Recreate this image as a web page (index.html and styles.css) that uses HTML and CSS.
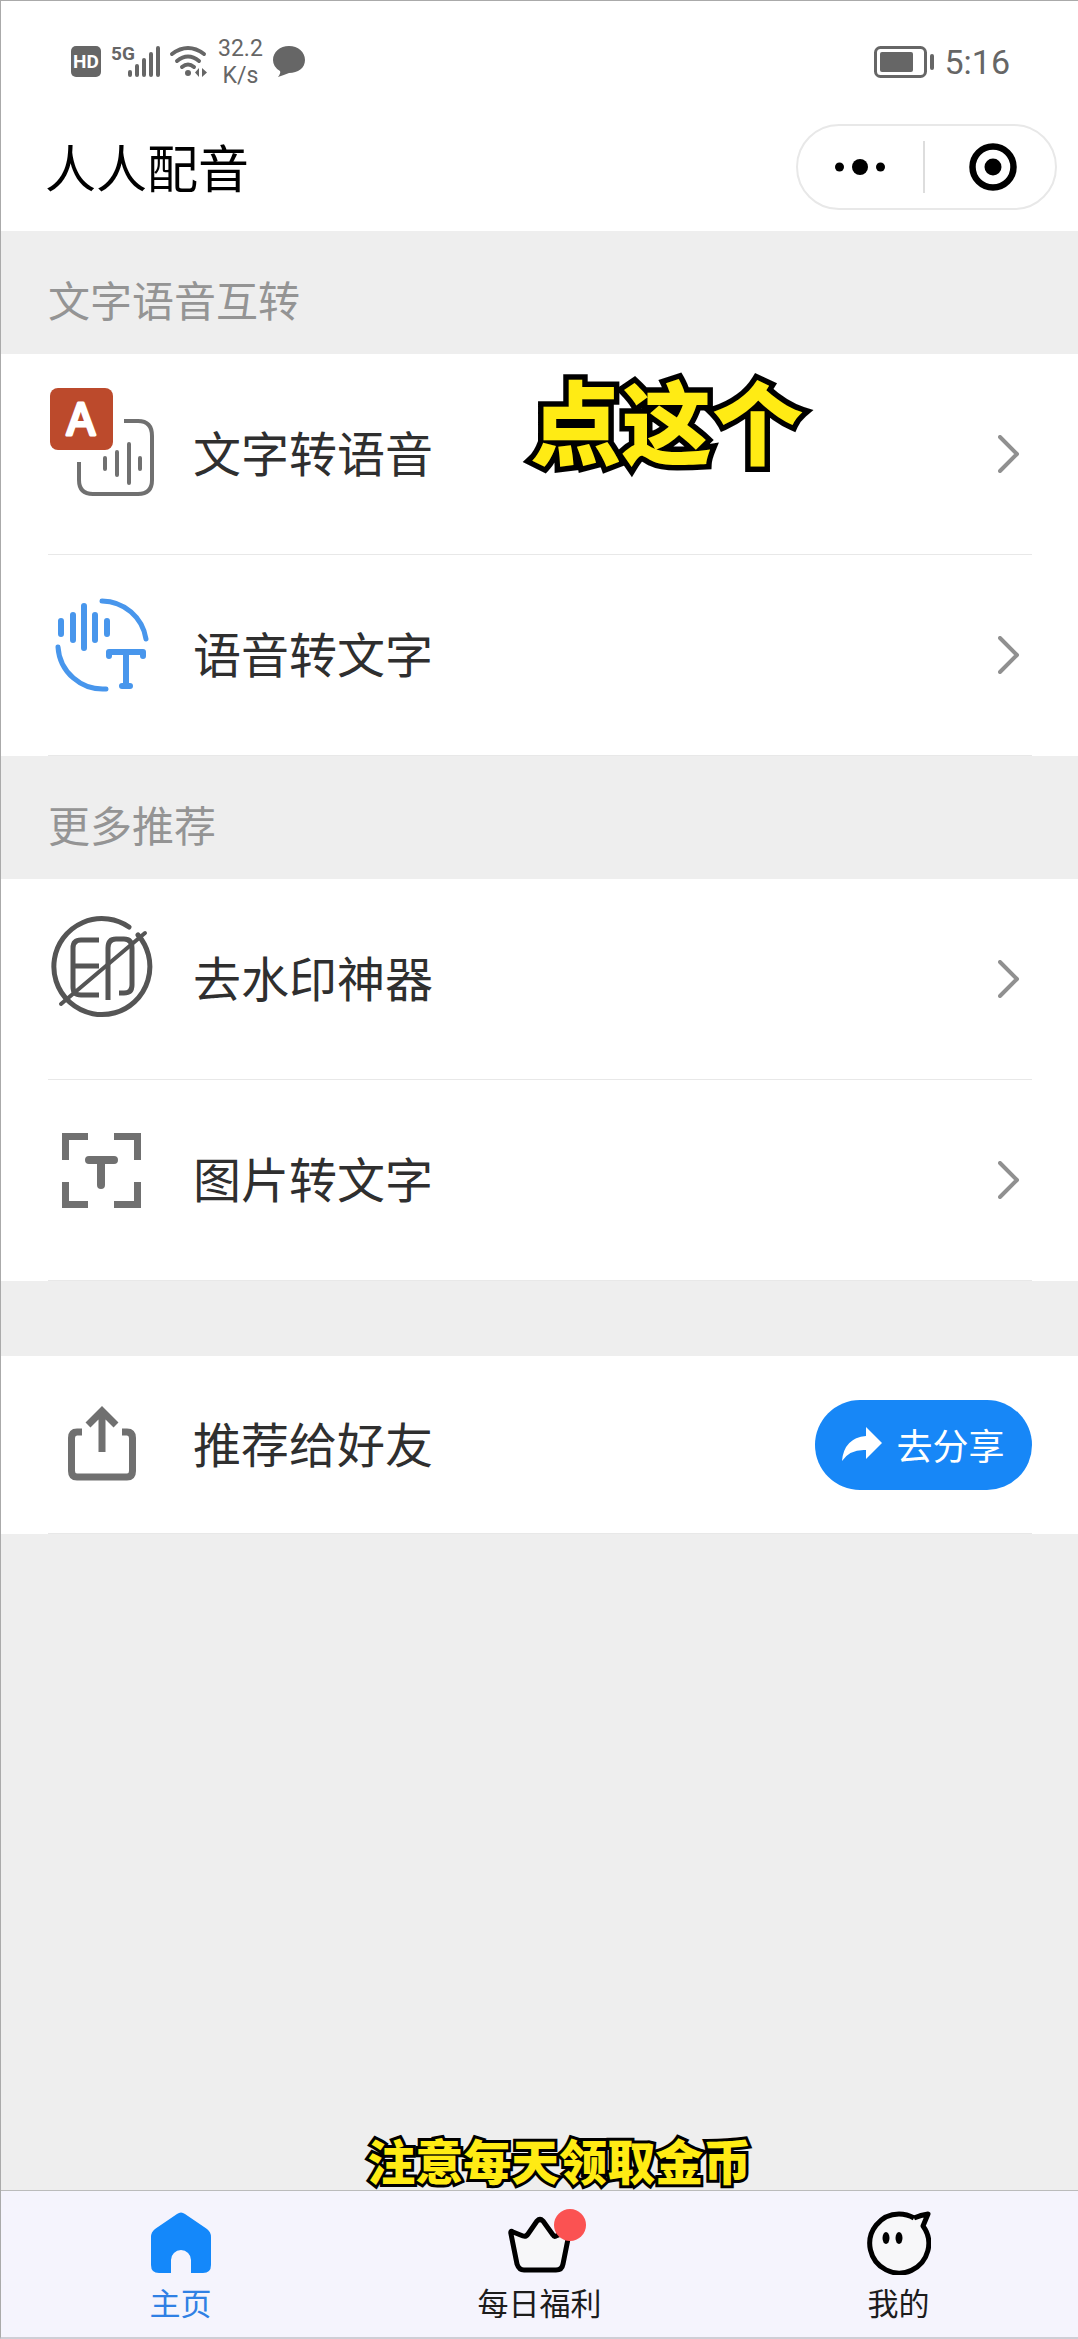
FILE: index.html
```html
<!DOCTYPE html>
<html lang="zh-CN">
<head>
<meta charset="utf-8">
<meta name="viewport" content="width=device-width, initial-scale=1">
<title>人人配音</title>
<link rel="stylesheet" href="styles.css">
</head>
<body>
<div class="app">
  <header class="header">
    <div class="status">
      <div class="status-group">
        <svg class="glyph" width="30" height="31" viewBox="0 0 30 31" aria-hidden="true">
          <rect width="30" height="31" rx="5"/>
          <text class="hd" x="15" y="22" text-anchor="middle">HD</text>
        </svg>
        <svg class="glyph" width="49" height="31" viewBox="0 0 49 31" aria-hidden="true">
          <text class="net" x="0" y="14">5G</text>
          <path class="signal" d="M19 26v3M26 20v9M33 14v15M40 8v21M47 2v27"/>
        </svg>
        <svg class="glyph" width="38" height="31" viewBox="0 0 38 31" aria-hidden="true">
          <path class="wave" d="M2 8Q18 -4 34 8M7 15Q18 6 29 15M12 21Q18 16 24 21"/>
          <circle cx="18" cy="27" r="3"/>
          <path d="M29 22v9l-4-4.500zM32 22v9l5-4.500z"/>
        </svg>
        <div class="speed"><span>32.2</span><span>K/s</span></div>
        <svg class="glyph" width="32" height="31" viewBox="0 0 32 31" aria-hidden="true">
          <path d="M16 0C25 0 32 6 32 14S25 27 16 27Q11 29 5 31Q8 27 7 25Q0 21 0 14C0 6 7 0 16 0z"/>
        </svg>
      </div>
      <div class="status-group">
        <svg class="glyph" width="60" height="32" viewBox="0 0 60 32" aria-hidden="true">
          <rect class="cell" x="1.500" y="1.500" width="50" height="29" rx="5"/>
          <rect x="6" y="6" width="33" height="20" rx="2"/>
          <rect x="56" y="8" width="4" height="16" rx="2"/>
        </svg>
        <time class="clock">5:16</time>
      </div>
    </div>
    <div class="navbar">
      <h1 class="title">人人配音</h1>
      <div class="capsule">
        <button class="capsule-button" type="button" aria-label="更多">
          <svg width="50" height="50" viewBox="0 0 50 50"><circle cx="4.500" cy="25" r="4.500"/><circle cx="25" cy="25" r="8"/><circle cx="45.500" cy="25" r="4.500"/></svg>
        </button>
        <span class="capsule-line"></span>
        <button class="capsule-button capsule-close" type="button" aria-label="关闭">
          <svg width="48" height="48" viewBox="0 0 48 48"><circle cx="24" cy="24" r="20.500" fill="none" stroke="#000" stroke-width="6.500"/><circle cx="24" cy="24" r="8.500"/></svg>
        </button>
      </div>
    </div>
  </header>

  <main class="content">
    <h2 class="group-title">文字语音互转</h2>
    <nav class="group">
      <a class="row" href="#tts">
        <svg class="row-icon" viewBox="0 0 108 108" aria-hidden="true">
          <rect x="2" y="0" width="63" height="62" rx="8" fill="#bc4a2c"/>
          <text class="badge-letter" x="33" y="47" text-anchor="middle">A</text>
          <path class="line dim" stroke-width="4" d="M76 33H90Q104 33 104 48V92Q104 106 90 106H45Q31 106 31 92V74"/>
          <path class="line dim round" stroke-width="4" d="M57 70V81M69 64V87M81 56V95M92 70V81"/>
        </svg>
        <span class="row-label">文字转语音</span>
        <strong class="caption caption-large">点这个</strong>
        <svg class="chevron" viewBox="0 0 22 38" aria-hidden="true"><path d="M2 2L19 19L2 36"/></svg>
      </a>
      <a class="row" href="#stt">
        <svg class="row-icon blue" viewBox="0 0 108 108" aria-hidden="true">
          <path class="line round" stroke-width="5" d="M54 12A45 45 0 0 1 98 50M10 58A45 45 0 0 0 58 100"/>
          <path class="line round" stroke-width="6" d="M13 32V45M25 26V51M36 17V59M47 26V51M59 32V45"/>
          <path class="line round" stroke-width="6" d="M61 67V63H95V67M78 63V97M74 97H82"/>
        </svg>
        <span class="row-label">语音转文字</span>
        <svg class="chevron" viewBox="0 0 22 38" aria-hidden="true"><path d="M2 2L19 19L2 36"/></svg>
      </a>
    </nav>

    <h2 class="group-title">更多推荐</h2>
    <nav class="group">
      <a class="row" href="#watermark">
        <svg class="row-icon dark" viewBox="0 0 108 108" aria-hidden="true">
          <path class="line round" stroke-width="5" d="M81 14A48 48 0 1 0 90 22"/>
          <path class="line round" stroke-width="4" d="M13 91L97 20"/>
          <path class="line" stroke-width="5" d="M51 27H33Q25 27 25 35V74Q25 82 33 82H51M25 53H51M60 87V35Q60 26 68 26H76Q84 26 84 35V72Q84 80 76 80H71"/>
        </svg>
        <span class="row-label">去水印神器</span>
        <svg class="chevron" viewBox="0 0 22 38" aria-hidden="true"><path d="M2 2L19 19L2 36"/></svg>
      </a>
      <a class="row" href="#ocr">
        <svg class="row-icon dim" viewBox="0 0 108 108" aria-hidden="true">
          <path class="line" stroke-width="7" d="M40 22.500H17.500V46M66 22.500H89.500V46M40 90.500H17.500V68M66 90.500H89.500V68"/>
          <path class="line round" stroke-width="8" d="M41 46H66M53 46V71"/>
        </svg>
        <span class="row-label">图片转文字</span>
        <svg class="chevron" viewBox="0 0 22 38" aria-hidden="true"><path d="M2 2L19 19L2 36"/></svg>
      </a>
    </nav>

    <section class="group group-share">
      <div class="row row-share">
        <svg class="row-icon dim" viewBox="0 0 108 108" aria-hidden="true">
          <path class="line" stroke-width="7" d="M34 41H29Q23.500 41 23.500 47V80Q23.500 86 29 86H79Q84.500 86 84.500 80V47Q84.500 41 79 41H74"/>
          <path class="line" stroke-width="7" d="M54 61V20M40 34L54 20L68 34"/>
        </svg>
        <span class="row-label">推荐给好友</span>
        <button class="share" type="button">
          <svg width="40" height="34" viewBox="0 0 40 34" aria-hidden="true"><path d="M24 0L40 16L24 32V23Q8 22 0 34Q2 11 24 9z" fill="#fff"/></svg>
          <span>去分享</span>
        </button>
      </div>
    </section>
  </main>

  <nav class="tabbar">
    <strong class="caption caption-small">注意每天领取金币</strong>
    <a class="tab tab-active" href="#home">
      <svg class="tab-icon" viewBox="0 0 64 64" aria-hidden="true"><path d="M28 3Q32 0 36 3L58 18Q62 21 62 26V54Q62 62 54 62H42V49A10 10 0 0 0 22 49V62H10Q2 62 2 54V26Q2 21 6 18z" fill="#1488fa"/></svg>
      <span>主页</span>
    </a>
    <a class="tab" href="#daily">
      <span class="tab-badge-box">
        <svg class="tab-icon" viewBox="0 0 64 64" aria-hidden="true"><path class="ink" d="M5 21Q2 19 3 23L9 53Q11 59 16 59H48Q54 59 55 53L61 23Q62 19 58 21L48 25Q46 26 45 24L35 10Q32 7 29 10L20 23Q18 26 15 25z"/></svg>
        <span class="dot"></span>
      </span>
      <span>每日福利</span>
    </a>
    <a class="tab" href="#me">
      <svg class="tab-icon" viewBox="0 0 64 64" aria-hidden="true"><path class="ink" d="M47 7Q40 3 32 3A29.500 29.500 0 1 0 56 15L61 3Q54 4 47 7"/><ellipse cx="19" cy="27" rx="3.500" ry="6"/><ellipse cx="32" cy="27" rx="3.500" ry="6"/></svg>
      <span>我的</span>
    </a>
  </nav>
</div>
</body>
</html>
```
FILE: styles.css
```css
* {
  box-sizing: border-box;
}

body {
  margin: 0;
  background: #eee;
  color: #2f2f2f;
  font-family: "Noto Sans CJK SC", sans-serif;
}

a {
  color: inherit;
  text-decoration: none;
}

button {
  border: 0;
  padding: 0;
  font: inherit;
  cursor: pointer;
}

h1, h2 {
  margin: 0;
  font-weight: 400;
}

svg {
  display: block;
  flex: none;
}

.app {
  display: flex;
  flex-direction: column;
  min-height: 100vh;
  border-top: 1px solid #aaa;
  border-left: 1px solid #aaa;
  border-bottom: 2px solid #cfced6;
}

/* Header */

.header {
  background: #fff;
  padding-bottom: 21px;
}

.status {
  display: flex;
  justify-content: space-between;
  align-items: center;
  height: 123px;
  padding: 0 68px 2px 70px;
  color: #666;
  font-family: Roboto, sans-serif;
}

.status-group {
  display: flex;
  align-items: center;
  gap: 10px;
}

.glyph {
  fill: #666;
  overflow: visible;
}

.hd {
  fill: #fff;
  font: 700 19px Roboto, sans-serif;
}

.net {
  font: 700 19px "Liberation Sans Narrow", Roboto, sans-serif;
}

.signal,
.wave,
.cell {
  fill: none;
  stroke: #666;
  stroke-width: 4;
  stroke-linecap: round;
}

.cell {
  stroke-width: 3;
}

.speed {
  display: flex;
  flex-direction: column;
  align-items: center;
  font-size: 23px;
  line-height: 27px;
}

.clock {
  font-size: 34px;
  line-height: 40px;
}

.navbar {
  display: flex;
  justify-content: space-between;
  align-items: center;
  padding: 0 21px 0 44px;
}

.title {
  padding-bottom: 2px;
  color: #000;
  font-size: 51px;
  line-height: 72px;
}

.capsule {
  display: flex;
  align-items: center;
  width: 261px;
  height: 86px;
  border: 2px solid #e8e8e8;
  border-radius: 43px;
}

.capsule-button {
  display: flex;
  flex: 1;
  justify-content: center;
  align-items: center;
  height: 100%;
  background: none;
}

.capsule-close {
  padding-left: 6px;
}

.capsule-line {
  width: 2px;
  height: 52px;
  background: #ddd;
}

/* Lists */

.content {
  flex: 1;
}

.group-title {
  padding: 36px 47px 24px;
  color: #949494;
  font-size: 42px;
  line-height: 63px;
}

.group {
  padding: 0 46px 0 47px;
  background: #fff;
}

.group-share {
  margin-top: 75px;
}

.row {
  position: relative;
  display: flex;
  align-items: center;
  height: 201px;
  border-bottom: 1px solid #e8e8e8;
}

.row-share {
  height: 178px;
}

.row-icon {
  width: 108px;
  height: 108px;
  margin-bottom: 24px;
}

.row-share .row-icon {
  margin-bottom: 0;
}

.row-label {
  flex: 1;
  padding: 0 0 6px 37px;
  font-size: 48px;
  line-height: 72px;
}

.line {
  fill: none;
  stroke: currentColor;
}

.round {
  stroke-linecap: round;
  stroke-linejoin: round;
}

.dim {
  color: #707070;
}

.dark {
  color: #555;
}

.blue {
  color: #4896ec;
}

.badge-letter {
  fill: #fff;
  stroke: #fff;
  stroke-width: 3;
  stroke-linejoin: round;
  font: 400 44px Inter, sans-serif;
}

.chevron {
  width: 22px;
  height: 38px;
  margin-right: 12px;
  fill: none;
  stroke: #909090;
  stroke-width: 4;
  stroke-linecap: round;
  stroke-linejoin: round;
}

.share {
  display: flex;
  justify-content: center;
  align-items: center;
  gap: 14px;
  width: 217px;
  height: 90px;
  padding-bottom: 2px;
  border-radius: 45px;
  background: #1787f7;
  color: #fff;
  font-size: 36px;
  line-height: 54px;
}

/* Highlight captions laid over the page */

.caption {
  position: absolute;
  color: #ffeb14;
  font-weight: 900;
  white-space: nowrap;
  paint-order: stroke fill;
  -webkit-text-stroke-color: #000;
}

.caption-large {
  top: -2px;
  left: 49%;
  font-size: 91px;
  line-height: 132px;
  -webkit-text-stroke-width: 11px;
}

.caption-small {
  top: -68px;
  left: 34%;
  font-size: 48px;
  line-height: 72px;
  -webkit-text-stroke-width: 6px;
}

/* Tab bar */

.tabbar {
  position: relative;
  display: grid;
  grid-template-columns: repeat(3, 1fr);
  padding: 20px 0 12px;
  border-top: 1px solid #bbb;
  background: #f5f4fd;
}

.tab {
  display: flex;
  flex-direction: column;
  align-items: center;
  gap: 4px;
  color: #1c1c1c;
  font-size: 31px;
  line-height: 46px;
}

.tab-active {
  color: #2f80e4;
}

.tab-icon {
  width: 64px;
  height: 64px;
}

.tab-badge-box {
  position: relative;
}

.ink {
  fill: #f7f7f9;
  stroke: #000;
  stroke-width: 5;
  stroke-linejoin: round;
}

.dot {
  position: absolute;
  top: -2px;
  right: -14px;
  width: 32px;
  height: 32px;
  border-radius: 50%;
  background: #fb5252;
}
```
